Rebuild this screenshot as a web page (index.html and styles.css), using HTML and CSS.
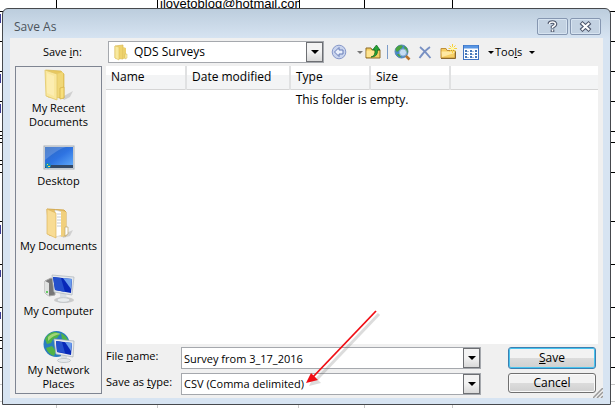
FILE: index.html
```html
<!DOCTYPE html>
<html lang="en">
<head>
    <meta charset="utf-8">
    <title>Save As</title>
    <link rel="stylesheet" href="styles.css">
</head>
<body>
    <!-- worksheet behind the dialog -->
    <svg class="sheet" aria-hidden="true">
        <g fill="#000">
            <rect x="56" width="1" height="20"/><rect x="157" width="1" height="20"/>
            <rect x="299" width="1" height="20"/><rect x="364" width="1" height="20"/><rect x="452" width="1" height="20"/>
            <rect y="11" width="100%" height="1"/><rect y="41" width="100%" height="1"/>
            <rect y="71" width="100%" height="1"/><rect y="101" width="100%" height="1"/>
            <rect y="131" width="100%" height="1"/><rect y="142" width="100%" height="1"/>
            <rect y="172" width="100%" height="1"/><rect y="221" width="100%" height="1"/>
            <rect y="264" width="100%" height="1"/><rect y="307" width="100%" height="1"/>
            <rect y="337" width="100%" height="1"/><rect y="367" width="100%" height="1"/>
            <rect y="135" width="3" height="1"/><rect y="138" width="3" height="1"/>
            <rect y="160" width="3" height="1"/><rect y="164" width="3" height="1"/>
            <rect y="340" width="3" height="1"/><rect y="348" width="3" height="1"/>
        </g>
        <g fill="#c8c8c8">
            <rect y="384" width="100%" height="1"/><rect y="401" width="100%" height="1"/>
            <rect x="56" y="402" width="1" height="6"/><rect x="157" y="402" width="1" height="6"/>
            <rect x="298" y="402" width="1" height="6"/><rect x="364" y="402" width="1" height="6"/><rect x="452" y="402" width="1" height="6"/>
        </g>
        <g fill="#3b3b94">
            <rect y="14" width="1" height="9"/><rect y="74" width="1" height="9"/><rect y="104" width="1" height="9"/>
            <rect y="225" width="1" height="9"/><rect y="270" width="1" height="7"/><rect y="312" width="1" height="7"/>
        </g>
    </svg>
    <div class="cell">ilovetoblog@hotmail.com</div>

    <form class="dialog">
        <div class="titlebar">
            <h1>Save As</h1>
            <button type="button" class="caption" aria-label="Help">
                <svg width="11" height="13" viewBox="0 0 11 13"><path d="M2.500 4V3.200Q3 2 5.500 2T8.500 4Q8.500 5.500 5.500 7V8.500M5.500 9.500V12" fill="none" stroke="#4d566b" stroke-width="3.600"/><path d="M2.500 4V3.200Q3 2 5.500 2T8.500 4Q8.500 5.500 5.500 7V8M5.500 9.500V11.500" fill="none" stroke="#fff" stroke-width="1.500"/></svg>
            </button>
            <button type="button" class="caption" aria-label="Close">
                <svg width="13" height="11" viewBox="0 0 13 11"><path d="M2 1.500L11 9.500M11 1.500L2 9.500" stroke="#4d566b" stroke-width="4.200"/><path d="M2.700 2L10.300 9M10.300 2L2.700 9" stroke="#fff" stroke-width="2"/></svg>
            </button>
        </div>

        <div class="content">
            <div class="lookup">
                <label for="save-in">Save <u>i</u>n:</label>
                <div class="combo folder-combo">
                    <svg width="14" height="17" viewBox="0 0 14 17"><path d="M1 2L9 1V15L1 14Z" fill="#efd36c" stroke="#d9b957" stroke-width=".7"/><path d="M1 2L5 3V16L1 14Z" fill="#f8e99f" stroke="#dfc260" stroke-width=".6"/><path d="M9 3L12 4V14L9 15Z" fill="#ecd06c"/><path d="M11 10h2v4l-2 1z" fill="#fff0a5" stroke="#ceb45b" stroke-width=".5"/></svg>
                    <select id="save-in"><option>QDS Surveys</option></select>
                    <span class="drop"></span>
                </div>
                <div class="toolbar">
                    <button type="button" aria-label="Back">
                        <svg width="16" height="16" viewBox="0 0 16 16"><circle cx="8" cy="8" r="6.800" fill="#c9d4ed" stroke="#8798c9"/><path d="M3.500 8L8 3.500V6H12V10H8V12.500Z" fill="#e9effb" stroke="#677cb8"/></svg>
                    </button>
                    <button type="button" class="menu-arrow back-menu" aria-label="Back history"><span class="tri grey"></span></button>
                    <button type="button" aria-label="Up one level">
                        <svg width="16" height="16" viewBox="0 0 16 16"><path d="M1 13V4H6L7 6H15V14H1Z" fill="#f4cf62" stroke="#8d6b27"/><path d="M1.500 6.500H9V13H1.500Z" fill="#ffe591"/><path d="M6 13Q10.500 12 10 6H7.500L11.500 1L15 6H12.500Q13 13 6 13Z" fill="#27a236" stroke="#08671d" stroke-width=".7"/></svg>
                    </button>
                    <span class="divider"></span>
                    <button type="button" class="search" aria-label="Search the Web">
                        <svg width="17" height="17" viewBox="0 0 17 17"><circle cx="7.500" cy="7.500" r="6.500" fill="#4688ca" stroke="#5b88b5"/><path d="M2 4Q5 0 9 2L7 5L3 8L1.500 6ZM10 2L13 4L14 9L11 7ZM3 10L6 10L7 13Q4 13 3 10Z" fill="#4ba33f"/><circle cx="9" cy="8.500" r="3.600" fill="#dcecfa" fill-opacity=".85" stroke="#86aacb"/><path d="M12 12L15.500 15.500" stroke="#b8742a" stroke-width="2.600"/></svg>
                    </button>
                    <button type="button" class="delete" aria-label="Delete">
                        <svg width="14" height="15" viewBox="0 0 14 15"><path d="M2 2Q7 6 12.500 13M12 2Q6 6 1.500 13" fill="none" stroke="#7890c3" stroke-width="1.800"/></svg>
                    </button>
                    <button type="button" class="new" aria-label="Create new folder">
                        <svg width="17" height="16" viewBox="0 0 17 16"><path d="M1 14V4.500H6L7 6.500H15V14Z" fill="#f6cf65" stroke="#c0903c"/><path d="M1.500 7.500H14.500V9L2 13Z" fill="#ffe9a3"/><path d="M1 14.500H15.500V7" fill="none" stroke="#8b682d"/><path d="M12.500 0V9M8.500 4.500H17M9.500 1.500L15.500 7.500M15.500 1.500L9.500 7.500" stroke="#f7cf3b"/><circle cx="12.500" cy="4.500" r="1.700" fill="#fff9ad"/></svg>
                    </button>
                    <button type="button" aria-label="Views">
                        <svg width="16" height="15" viewBox="0 0 16 15"><rect x=".5" y=".5" width="15" height="14" fill="#fff" stroke="#3d72c2"/><path d="M1 2H15" stroke="#5996e4" stroke-width="3"/><path d="M2 6h2M2 9h2M2 12h2M7 6h2M7 9h2M7 12h2M12 6h2M12 9h2M12 12h2" stroke="#4778b9" stroke-width="2"/><path d="M4 6.500h2M9 6.500h2M4 9.500h2M9 9.500h2M4 12.500h2M9 12.500h2" stroke="#a6bddb"/></svg>
                    </button>
                    <button type="button" class="menu-arrow views-menu" aria-label="Views menu"><span class="tri"></span></button>
                    <button type="button" class="tools">Too<u>l</u>s <span class="tri"></span></button>
                </div>
            </div>

            <div class="main">
                <nav class="places">
                    <button type="button" class="place">
                        <svg width="32" height="32" viewBox="0 0 32 32"><path d="M19 28L30 22L27 28L21 31Z" fill="#bbb" opacity=".6"/><path d="M3 1L18 2L21 5V29L5 28Z" fill="#e8c85f" stroke="#d7b74e" stroke-width=".7"/><path d="M14 5L20 3V27L14 29Z" fill="#f0d777"/><path d="M2 1L14 5V31L3 27Z" fill="#f9e79d" stroke="#e1c667" stroke-width=".8"/><path d="M4 4L11 7V27L4 24Z" fill="#fcedb0"/><path d="M17 19L21 18V29L17 30Z" fill="#f8df7c" stroke="#d2ad43" stroke-width=".7"/></svg>
                        <span>My Recent<br>Documents</span>
                    </button>
                    <button type="button" class="place single">
                        <svg width="32" height="32" viewBox="0 0 32 32"><defs><linearGradient id="screen" x2="1" y2="1"><stop stop-color="#2a65bd"/><stop offset=".5" stop-color="#2e73e2"/><stop offset="1" stop-color="#62acfa"/></linearGradient></defs><rect x="1" y="4" width="30" height="23" fill="#e0e5ea" stroke="#a7afb7"/><rect x="2" y="5" width="28" height="20" fill="url(#screen)"/><path d="M2 5H23Q15 7 2 18Z" fill="#fff" opacity=".18"/><path d="M2 23H30V26H2Z" fill="#334967"/><circle cx="5" cy="23.500" r="2.800" fill="#188ac0"/><path d="M4 22h1v1H4zM5 24h2v1H5z" fill="#f7dc49"/></svg>
                        <span>Desktop</span>
                    </button>
                    <button type="button" class="place single">
                        <svg width="32" height="32" viewBox="0 0 32 32"><path d="M19 28L30 23L27 29L20 31Z" fill="#bbb" opacity=".6"/><path d="M4 2L21 3L23 5V29L6 28Z" fill="#e7c167" stroke="#d4aa50"/><path d="M12 3L20 5V28L12 30Z" fill="#fff" stroke="#ccc" stroke-width=".6"/><path d="M14 7H19M14 10H19M14 13H19M14 16H19M14 19H19" stroke="#c4cbd4"/><path d="M18 4L23 5V28L18 30Z" fill="#f1d07d"/><path d="M4 2L13 6V31L4 27Z" fill="#f8dc94" stroke="#ddb65d" stroke-width=".7"/><path d="M22 20L25 20V27L22 29Z" fill="#fff" stroke="#bba66e" stroke-width=".7"/></svg>
                        <span>My Documents</span>
                    </button>
                    <button type="button" class="place">
                        <svg width="32" height="32" viewBox="0 0 32 32"><ellipse cx="21" cy="28" rx="10" ry="3" fill="#bbb" opacity=".7"/><path d="M2 9L8 6L12 8V23L6 24L2 21Z" fill="#777" stroke="#a5a5a5"/><path d="M2 9L6 11V24L2 21Z" fill="#e0e2e1"/><path d="M4 19v2" stroke="#3ec43a" stroke-width="1.500"/><path d="M17 20L23 21L24 27L17 28Z" fill="#d8dee2"/><ellipse cx="20.500" cy="28" rx="6.500" ry="2.300" fill="#e9eced" stroke="#b9bfc2" stroke-width=".7"/><path d="M9 3L31 5L29 23L11 20Z" fill="#e4e8eb" stroke="#aab3ba" stroke-width=".7"/><path d="M10 5L29 7L28 21L12 18Z" fill="#0728b8"/><path d="M10 5L18 6L22 20L12 18Z" fill="#2450cc"/><path d="M20 6L29 7L28 17Z" fill="#6a9cec"/></svg>
                        <span>My Computer</span>
                    </button>
                    <button type="button" class="place">
                        <svg width="32" height="32" viewBox="0 0 32 32"><circle cx="13.500" cy="13" r="13" fill="#287cc0"/><path d="M2 8Q6 0 13 1L17 3L14 7L10 8L8 12L4 13ZM18 2Q24 5 25 10L19 8ZM3 17L9 15L13 20L11 25Q5 23 3 17Z" fill="#50b348"/><path d="M5 6Q11 0 18 3Q10 4 5 10Z" fill="#c3e48a" opacity=".7"/><path d="M18 23L24 24V29H18Z" fill="#d8dee2"/><ellipse cx="21" cy="29.500" rx="6.500" ry="2" fill="#e6e9eb" stroke="#b3babd" stroke-width=".7"/><path d="M11 8L31 10L30 26L13 23Z" fill="#e8ebed" stroke="#a7b0b7" stroke-width=".7"/><path d="M13 10L29 12L28 24L14 21Z" fill="#0728b8"/><path d="M13 10L19 11L22 22L14 21Z" fill="#2450cc"/><path d="M22 11L29 12L28 20Z" fill="#6a9cec"/></svg>
                        <span>My Network<br>Places</span>
                    </button>
                </nav>

                <div class="right">
                    <div class="files">
                        <table>
                            <thead>
                                <tr><th class="name">Name</th><th class="date">Date modified</th><th class="type">Type</th><th class="size">Size</th><th class="rest"></th></tr>
                            </thead>
                            <tbody>
                                <tr><td colspan="5">This folder is empty.</td></tr>
                            </tbody>
                        </table>
                    </div>
                    <div class="footer">
                        <div class="fields">
                            <label for="file-name">File <u>n</u>ame:</label>
                            <div class="combo">
                                <input id="file-name" type="text" value="Survey from 3_17_2016">
                                <span class="drop"></span>
                            </div>
                            <label for="file-type">Save as <u>t</u>ype:</label>
                            <div class="combo">
                                <select id="file-type"><option>CSV (Comma delimited)</option></select>
                                <span class="drop"></span>
                            </div>
                        </div>
                        <div class="actions">
                            <button type="button" class="btn default"><u>S</u>ave</button>
                            <button type="button" class="btn">Cancel</button>
                        </div>
                    </div>
                </div>
            </div>
            <svg class="grip" width="10" height="10" viewBox="0 0 10 10" aria-hidden="true"><path d="M0 10L10 0M4 10L10 4M8 10L10 8" stroke="#999" stroke-width="1.500"/></svg>
        </div>
    </form>

    <!-- pointer to the file type -->
    <svg class="pointer" width="84" height="84" viewBox="0 0 84 84" aria-hidden="true">
        <g opacity=".2" transform="translate(3 3)"><path d="M72 3L10 68" stroke="#555" stroke-width="3"/><path d="M2 75L7 65L14 72Z" fill="#555"/></g>
        <path d="M72 3L8 70" stroke="#f00d14" stroke-width="1.800"/><path d="M2 75L7 65L14 72Z" fill="#f00d14"/>
    </svg>
</body>
</html>
```
FILE: styles.css
```css
* {
    box-sizing: border-box;
}

body {
    margin: 0;
    height: 100vh;
    min-height: 400px;
    display: flex;
    position: relative;
    overflow: hidden;
    background: #fff;
    color: #000;
    font: 12px/14px "Open Sans", sans-serif;
}

button, input, select {
    font: inherit;
    color: inherit;
    margin: 0;
    padding: 0;
    border: 0;
    background: none;
}

svg {
    display: block;
    flex: none;
}

u {
    text-underline-offset: 1px;
}

.sheet {
    position: absolute;
    width: 100%;
    height: 100%;
}

.cell {
    position: absolute;
    left: 160px;
    top: -4px;
    width: 139px;
    overflow: hidden;
    font: 13px/16px "Liberation Sans", sans-serif;
}

.dialog {
    position: relative;
    flex: 1;
    margin: 8px 4px 3px 2px;
    padding: 0 7px 6px;
    display: flex;
    flex-direction: column;
    border: 1px solid #46494d;
    border-radius: 6px 6px 0 0;
    background: linear-gradient(#bccddd, #d7e4f2 30px);
}

.titlebar {
    display: flex;
    align-items: center;
    gap: 2px;
    height: 29px;
    padding: 0 2px 6px 4px;
}

.titlebar h1 {
    flex: 1;
    margin: 0;
    padding-top: 12px;
    font-size: 12px;
    font-weight: normal;
    color: #4c545c;
}

.caption {
    display: flex;
    align-items: center;
    justify-content: center;
    width: 31px;
    height: 17px;
    margin-top: 12px;
    border: 1px solid #8697b1;
    border-radius: 2px;
    box-shadow: inset 0 0 0 1px #d7e4f1;
    background: #c3d2e2;
}

.content {
    position: relative;
    flex: 1;
    display: flex;
    flex-direction: column;
    padding: 3px 5px;
    background: #f0f0f0;
}

.lookup {
    display: flex;
    align-items: center;
    padding-bottom: 3px;
}

.lookup label {
    width: 93px;
    padding-right: 26px;
    text-align: right;
    font-size: 11px;
}

.combo {
    display: flex;
    align-items: center;
    height: 22px;
    border: 1px solid #a5a8ad;
    background: #fff;
}

.combo input, .combo select {
    flex: 1;
    min-width: 0;
    height: 20px;
    padding-left: 2px;
    appearance: none;
    outline: 0;
    font-size: 11px;
}

.folder-combo {
    flex: 0 1 216px;
    padding-left: 5px;
}

.folder-combo select {
    padding-left: 6px;
    font-size: 12px;
}

.drop {
    display: flex;
    align-items: center;
    justify-content: center;
    width: 17px;
    height: 20px;
    border: 1px solid #6d6f73;
    background: linear-gradient(#f3f3f3 45%, #d9d9d9);
    pointer-events: none;
}

.drop::after, .tri {
    content: "";
    border: 4px solid transparent;
    border-top-color: #000;
    border-bottom: 0;
}

.toolbar {
    display: flex;
    align-items: center;
    padding-left: 7px;
}

.tri {
    display: inline-block;
    border-width: 3px;
    border-bottom: 0;
}

.tri.grey {
    border-top-color: #777;
}

.menu-arrow {
    display: flex;
}

.back-menu {
    padding: 0 2px 0 10px;
}

.divider {
    width: 1px;
    height: 14px;
    margin: 0 6px;
    background: #7b9bc8;
}

.delete {
    margin: 0 8px 0 7px;
}

.new {
    margin-right: 6px;
}

.views-menu {
    padding-left: 9px;
}

.tools {
    display: flex;
    align-items: center;
    padding-left: 1px;
    font-size: 11px;
}

.tools .tri {
    margin-left: 7px;
}

.main {
    flex: 1;
    display: flex;
    gap: 4px;
}

.places {
    width: 87px;
    display: flex;
    flex-direction: column;
    gap: 13px;
    margin-bottom: 1px;
    padding-top: 2px;
    border: 1px solid #7f8592;
}

.place {
    display: flex;
    flex-direction: column;
    align-items: center;
    font-size: 11px;
}

.place.single {
    margin-bottom: 6px;
}

.right {
    flex: 1;
    display: flex;
    flex-direction: column;
}

.files {
    flex: 1;
    background: #fff;
}

table {
    width: 100%;
    table-layout: fixed;
    border-collapse: collapse;
}

th {
    height: 23px;
    padding: 0 0 0 5px;
    border-right: 2px solid #e0e1e2;
    border-bottom: 1px solid #d5d5d5;
    background: linear-gradient(#fff 40%, #f3f4f5 40%);
    text-align: left;
    font-weight: normal;
}

.name {
    width: 80px;
}

.date {
    width: 104px;
}

.type, .size {
    width: 80px;
}

.rest {
    border-right: 0;
}

td {
    padding: 3px 0;
    text-align: center;
}

.footer {
    display: flex;
    align-items: flex-start;
    gap: 27px;
    padding: 3px 2px 0 0;
}

.fields {
    flex: 1;
    display: grid;
    grid-template-columns: 75px 1fr;
    row-gap: 4px;
    align-items: center;
}

.fields label {
    padding-bottom: 4px;
    font-size: 11px;
}

.actions {
    width: 88px;
    display: flex;
    flex-direction: column;
    gap: 4px;
}

.btn {
    height: 20px;
    border: 1px solid #707070;
    border-radius: 3px;
    box-shadow: inset 0 0 0 1px #fafafa;
    background: linear-gradient(#f2f2f2 50%, #dcdcdc 50%, #d0d0d0);
}

.btn.default {
    height: 22px;
    border-color: #3c7fb1;
    box-shadow: inset 0 0 0 1px #48c4ef;
}

.grip {
    position: absolute;
    right: 0;
    bottom: 0;
}

.pointer {
    position: absolute;
    left: 304px;
    top: 308px;
    pointer-events: none;
}
```
